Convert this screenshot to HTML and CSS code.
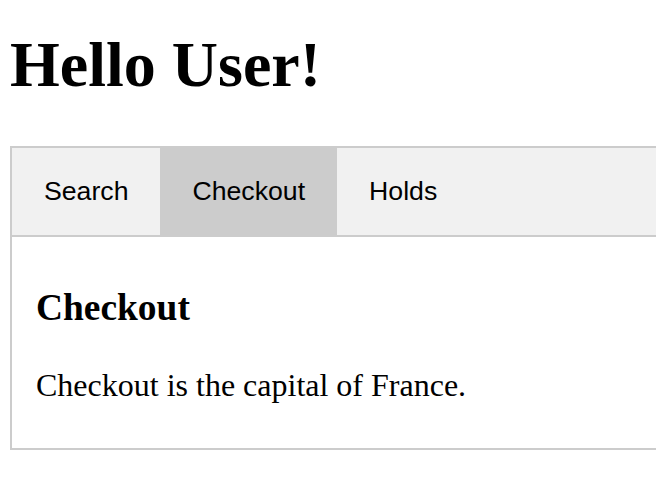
FILE: index.html
```html
<!DOCTYPE html>
<html lang="en">
<head>
<meta charset="utf-8">
<title>Hello User</title>
<link rel="stylesheet" href="styles.css">
</head>
<body>
<h1 class="title">Hello User!</h1>
<div class="tabs">
  <button class="tablink">Search</button>
  <button class="tablink active">Checkout</button>
  <button class="tablink">Holds</button>
</div>
<div class="tabcontent">
  <h3 class="panel-title">Checkout</h3>
  <p class="panel-text">Checkout is the capital of France.</p>
</div>
</body>
</html>
```
FILE: styles.css
```css
body {
  margin: 0 0 0 10px;
  padding-top: 28px;
  font-family: "Liberation Serif", "Times New Roman", serif;
  color: #000;
  background: #fff;
}
.title {
  font-size: 64px;
  font-weight: bold;
  margin: 0 0 44px 0;
  line-height: normal;
}
.tabs {
  display: flex;
  border: 2px solid #ccc;
  border-right: none;
  background: #f1f1f1;
  overflow: hidden;
}
.tablink {
  font-family: "Liberation Sans", Arial, Helvetica, sans-serif;
  font-size: 26.67px;
  line-height: normal;
  color: #000;
  background: inherit;
  border: none;
  outline: none;
  padding: 28px 32px;
  margin: 0;
}
.tablink.active {
  background: #ccc;
}
.tabcontent {
  border: 2px solid #ccc;
  border-top: none;
  border-right: none;
  padding: 12px 24px;
}
.panel-title {
  font-size: 37.44px;
  font-weight: bold;
  margin: 37.44px 0;
}
.panel-text {
  font-size: 32px;
  margin: 32px 0;
}
```
